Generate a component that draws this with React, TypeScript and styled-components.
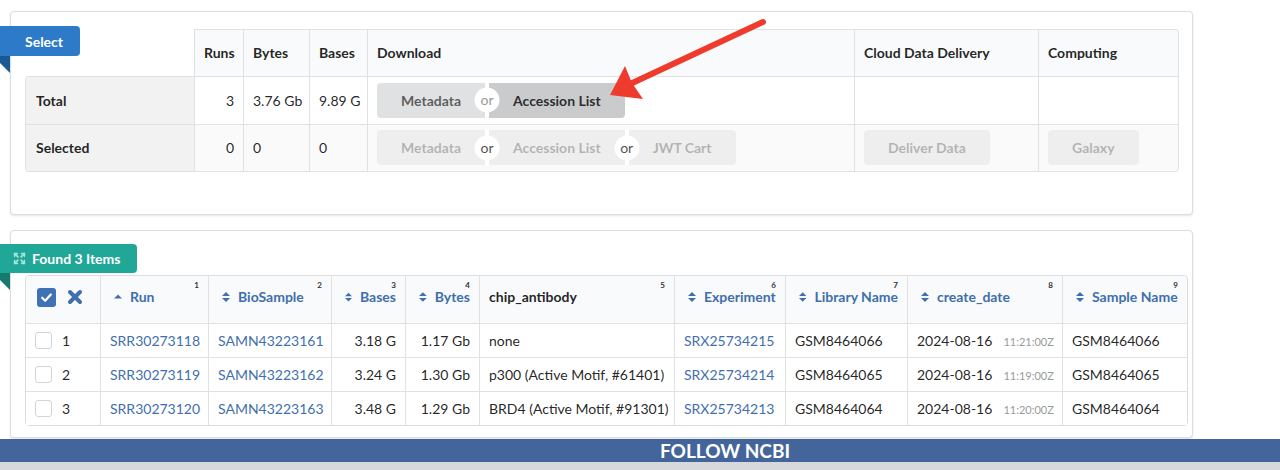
import React from 'react';
import styled, { createGlobalStyle } from 'styled-components';

const GlobalStyle = createGlobalStyle`
  html, body { margin: 0; padding: 0; background: #fff; overflow-x: hidden; }
  body {
    font-family: Lato, "Helvetica Neue", Arial, sans-serif;
    font-size: 14px;
    color: rgba(0, 0, 0, 0.87);
  }
  * { box-sizing: border-box; }
`;

const LINE = '#e0e1e2';
const BLUE = '#3f6fad';

const Page = styled.div`
  position: relative;
  display: flex;
  flex-direction: column;
  padding-top: 11px;
  width: 1280px;
  height: 470px;
  overflow: hidden;
`;

const Content = styled.div`
  display: flex;
  flex-direction: column;
  gap: 15px;
  padding-left: 10px;
`;

const Segment = styled.section<{ $pad: string }>`
  position: relative;
  width: 1183px;
  border: 1px solid #dcdddf;
  border-radius: 4px;
  box-shadow: 0 1px 2px 0 rgba(34, 36, 38, 0.12);
  padding: ${(p) => p.$pad};
  background: #fff;
`;

const Ribbon = styled.div<{ $bg: string; $fold: string; $top: number; $h: number; $pl: number }>`
  position: absolute;
  top: ${(p) => p.$top}px;
  left: -18px;
  height: ${(p) => p.$h}px;
  padding: 0 17px 0 ${(p) => p.$pl}px;
  display: flex;
  align-items: center;
  gap: 6px;
  background: ${(p) => p.$bg};
  color: #fff;
  font-weight: 700;
  font-size: 14px;
  border-radius: 0 4px 4px 0;
  z-index: 2;
  &::after {
    content: '';
    position: absolute;
    top: 100%;
    left: 0;
    border-style: solid;
    border-width: 0 17px 17px 0;
    border-color: transparent ${(p) => p.$fold} transparent transparent;
  }
`;

/* ---------- summary table ---------- */

const Col = styled.col<{ $w: number }>`
  width: ${(p) => p.$w}px;
`;

const SummaryTable = styled.table`
  width: 1154px;
  table-layout: fixed;
  border-collapse: separate;
  border-spacing: 0;
  & th, & td {
    border-top: 1px solid ${LINE};
    border-left: 1px solid ${LINE};
    padding: 0 9px;
    vertical-align: middle;
    text-align: left;
    white-space: nowrap;
  }
  & tr > :last-child { border-right: 1px solid ${LINE}; }
  & tbody tr:last-child > * { border-bottom: 1px solid ${LINE}; }
  & thead tr > :last-child { border-top-right-radius: 4px; }
  & tbody tr:first-child > :first-child { border-top-left-radius: 4px; }
  & tbody tr:last-child > :first-child { border-bottom-left-radius: 4px; }
  & tbody tr:last-child > :last-child { border-bottom-right-radius: 4px; }
`;

const SumHead = styled.th`
  height: 47px;
  background: #f9fafb;
  font-weight: 700;
  color: rgba(0, 0, 0, 0.87);
  padding-bottom: 2px !important;
`;

const BlankHead = styled.th`
  && {
    border: none;
    background: transparent;
  }
`;

const SumRow = styled.tr<{ $shade?: boolean }>`
  & > td {
    height: 48px;
    padding-bottom: 1px;
    background: ${(p) => (p.$shade ? '#fafafa' : '#fff')};
  }
`;

const LabelCell = styled.td`
  && { background: #f2f2f2; padding-left: 10px; }
  font-weight: 700;
`;

const SumCell = styled.td<{ $right?: boolean }>`
  && { text-align: ${(p) => (p.$right ? 'right' : 'left')}; }
`;

const BtnGroup = styled.div`
  display: inline-flex;
  align-items: stretch;
  vertical-align: middle;
  & > button:not(:first-child) { border-top-left-radius: 0; border-bottom-left-radius: 0; }
  & > button:not(:last-child) { border-top-right-radius: 0; border-bottom-right-radius: 0; }
`;

const Btn = styled.button<{ $active?: boolean }>`
  font-family: inherit;
  font-weight: 700;
  font-size: 14px;
  height: 35px;
  padding: 0 24px;
  border: none;
  border-radius: 4px;
  background: ${(p) => (p.$active ? '#cacbcd' : '#e0e1e2')};
  color: ${(p) => (p.$active ? 'rgba(0,0,0,0.8)' : 'rgba(0,0,0,0.6)')};
  cursor: pointer;
  white-space: nowrap;
  vertical-align: middle;
  &:disabled { opacity: 0.45; cursor: default; }
`;

const Or = styled.div<{ $c: string }>`
  position: relative;
  width: 4px;
  background: #fff;
  z-index: 1;
  &::before {
    content: 'or';
    position: absolute;
    top: 50%;
    left: 50%;
    transform: translate(-50%, -50%);
    width: 25px;
    height: 25px;
    line-height: 24px;
    border-radius: 50%;
    background: #fff;
    color: ${(p) => p.$c};
    text-align: center;
    font-size: 14px;
  }
`;

/* ---------- results table ---------- */

const ResultTable = styled.table`
  width: 1163px;
  table-layout: fixed;
  border-collapse: separate;
  border-spacing: 0;
  border: 1px solid #dcdddf;
  border-radius: 4px;
  & th, & td {
    padding: 0 9px;
    vertical-align: middle;
    text-align: left;
    border-left: 1px solid ${LINE};
    white-space: nowrap;
  }
  & tr > :first-child { border-left: none; }
  & tbody td { border-top: 1px solid ${LINE}; }
`;

const ResHead = styled.th<{ $sortable?: boolean }>`
  position: relative;
  height: 47px;
  background: #f9fafb;
  font-weight: 700;
  color: ${(p) => (p.$sortable ? BLUE : 'rgba(0,0,0,0.87)')};
  && { padding-bottom: 5px; }
  &:first-child { border-top-left-radius: 4px; }
  &:last-child { border-top-right-radius: 4px; }
`;

const HeadInner = styled.div<{ $indent?: boolean }>`
  display: flex;
  align-items: center;
  gap: 8px;
  padding-left: ${(p) => (p.$indent ? 4 : 0)}px;
  line-height: 20px;
`;

const ColNum = styled.sup`
  position: absolute;
  top: 5px;
  right: 9px;
  font-size: 8px;
  line-height: 8px;
  font-weight: 700;
  color: #333;
`;

const ResRow = styled.tr`
  & > td { height: 34px; background: #fff; }
`;

const ResCell = styled.td<{ $right?: boolean }>`
  && { text-align: ${(p) => (p.$right ? 'right' : 'left')}; }
`;

const Link = styled.a`
  color: ${BLUE};
  text-decoration: none;
`;

const CheckCell = styled.div`
  display: flex;
  align-items: center;
  gap: 10px;
`;

const HeadCheck = styled.div`
  display: flex;
  align-items: center;
  gap: 11px;
  padding-left: 2px;
  color: ${BLUE};
`;

const CheckBox = styled.span<{ $checked?: boolean }>`
  display: inline-flex;
  align-items: center;
  justify-content: center;
  flex: none;
  width: ${(p) => (p.$checked ? 19 : 17)}px;
  height: ${(p) => (p.$checked ? 19 : 17)}px;
  border-radius: 3px;
  background: ${(p) => (p.$checked ? '#3e72b5' : '#fff')};
  border: ${(p) => (p.$checked ? 'none' : '1px solid #d4d4d5')};
`;

const Time = styled.span`
  margin-left: 11px;
  font-size: 11px;
  color: #999;
`;

/* ---------- footer ---------- */

const Footer = styled.footer`
  margin-top: 1px;
  height: 25px;
  background: #44659c;
  color: #fff;
  display: flex;
  align-items: center;
  justify-content: center;
  padding-left: 170px;
  font-weight: 700;
  font-size: 19px;
`;

const FooterBase = styled.div`
  height: 10px;
  background: #d7d8db;
`;

const ArrowOverlay = styled.svg`
  position: absolute;
  left: 600px;
  top: 10px;
  pointer-events: none;
  z-index: 5;
`;

/* ---------- icons ---------- */

const SortIcon = ({ up }: { up?: boolean }) => (
  <svg width="8" height="12" viewBox="0 0 8 12" aria-hidden>
    {up ? (
      <path d="M0 7.5 L4 3.5 L8 7.5Z" fill="currentColor" />
    ) : (
      <>
        <path d="M0 5 L4 1 L8 5Z" fill="currentColor" />
        <path d="M0 7 L4 11 L8 7Z" fill="currentColor" />
      </>
    )}
  </svg>
);

const ExpandIcon = () => (
  <svg width="13" height="13" viewBox="0 0 24 24" fill="none" stroke="#a7e4da" strokeWidth="3" strokeLinecap="round" strokeLinejoin="round" aria-hidden>
    <path d="m15 15 6 6" />
    <path d="m15 9 6-6" />
    <path d="M21 16v5h-5" />
    <path d="M21 8V3h-5" />
    <path d="M3 16v5h5" />
    <path d="m3 21 6-6" />
    <path d="M3 8V3h5" />
    <path d="M9 9 3 3" />
  </svg>
);

const CheckMark = () => (
  <svg width="13" height="13" viewBox="0 0 24 24" fill="none" stroke="#fff" strokeWidth="4" strokeLinecap="round" strokeLinejoin="round" aria-hidden>
    <path d="M4 12.5 9.5 18 20 6.5" />
  </svg>
);

const TimesIcon = () => (
  <svg width="16" height="16" viewBox="0 0 16 16" aria-hidden>
    <path d="M3 3 L13 13 M13 3 L3 13" stroke="currentColor" strokeWidth="4" strokeLinecap="round" />
  </svg>
);

/* ---------- data ---------- */

const rows = [
  { n: 1, run: 'SRR30273118', bio: 'SAMN43223161', bases: '3.18 G', bytes: '1.17 Gb', ab: 'none', exp: 'SRX25734215', lib: 'GSM8464066', date: '2024-08-16', time: '11:21:00Z', sample: 'GSM8464066' },
  { n: 2, run: 'SRR30273119', bio: 'SAMN43223162', bases: '3.24 G', bytes: '1.30 Gb', ab: 'p300 (Active Motif, #61401)', exp: 'SRX25734214', lib: 'GSM8464065', date: '2024-08-16', time: '11:19:00Z', sample: 'GSM8464065' },
  { n: 3, run: 'SRR30273120', bio: 'SAMN43223163', bases: '3.48 G', bytes: '1.29 Gb', ab: 'BRD4 (Active Motif, #91301)', exp: 'SRX25734213', lib: 'GSM8464064', date: '2024-08-16', time: '11:20:00Z', sample: 'GSM8464064' },
];

const headers: { label: string; sort?: 'both' | 'up' }[] = [
  { label: 'Run', sort: 'up' },
  { label: 'BioSample', sort: 'both' },
  { label: 'Bases', sort: 'both' },
  { label: 'Bytes', sort: 'both' },
  { label: 'chip_antibody' },
  { label: 'Experiment', sort: 'both' },
  { label: 'Library Name', sort: 'both' },
  { label: 'create_date', sort: 'both' },
  { label: 'Sample Name', sort: 'both' },
];

export default function App() {
  return (
    <Page>
      <GlobalStyle />
      <Content>
        <Segment $pad="17px 13px 42px 14px">
          <Ribbon $bg="#2d7ac8" $fold="#1b5896" $top={14} $h={30} $pl={32}>
            Select
          </Ribbon>
          <SummaryTable>
            <colgroup>
              {[169, 49, 66, 58, 487, 184, 141].map((w, i) => (
                <Col $w={w} key={i} />
              ))}
            </colgroup>
            <thead>
              <tr>
                <BlankHead />
                <SumHead>Runs</SumHead>
                <SumHead>Bytes</SumHead>
                <SumHead>Bases</SumHead>
                <SumHead>Download</SumHead>
                <SumHead>Cloud Data Delivery</SumHead>
                <SumHead>Computing</SumHead>
              </tr>
            </thead>
            <tbody>
              <SumRow>
                <LabelCell>Total</LabelCell>
                <SumCell $right>3</SumCell>
                <SumCell>3.76 Gb</SumCell>
                <SumCell>9.89 G</SumCell>
                <SumCell>
                  <BtnGroup>
                    <Btn>Metadata</Btn>
                    <Or $c="#9a9a9a" />
                    <Btn $active>Accession List</Btn>
                  </BtnGroup>
                </SumCell>
                <SumCell />
                <SumCell />
              </SumRow>
              <SumRow $shade>
                <LabelCell>Selected</LabelCell>
                <SumCell $right>0</SumCell>
                <SumCell>0</SumCell>
                <SumCell>0</SumCell>
                <SumCell>
                  <BtnGroup>
                    <Btn disabled>Metadata</Btn>
                    <Or $c="#555" />
                    <Btn disabled>Accession List</Btn>
                    <Or $c="#555" />
                    <Btn disabled>JWT Cart</Btn>
                  </BtnGroup>
                </SumCell>
                <SumCell>
                  <Btn disabled>Deliver Data</Btn>
                </SumCell>
                <SumCell>
                  <Btn disabled>Galaxy</Btn>
                </SumCell>
              </SumRow>
            </tbody>
          </SummaryTable>
        </Segment>

        <Segment $pad="44px 4px 11px 14px">
          <Ribbon $bg="#21a797" $fold="#137a6d" $top={13} $h={29} $pl={20}>
            <ExpandIcon />
            Found 3 Items
          </Ribbon>
          <ResultTable>
            <colgroup>
              {[74, 108, 123, 74, 74, 195, 111, 122, 155, 125].map((w, i) => (
                <Col $w={w} key={i} />
              ))}
            </colgroup>
            <thead>
              <tr>
                <ResHead>
                  <HeadCheck>
                    <CheckBox $checked>
                      <CheckMark />
                    </CheckBox>
                    <TimesIcon />
                  </HeadCheck>
                </ResHead>
                {headers.map((h, i) => (
                  <ResHead key={h.label} $sortable={!!h.sort}>
                    <HeadInner $indent={!!h.sort}>
                      {h.sort && <SortIcon up={h.sort === 'up'} />}
                      {h.label}
                    </HeadInner>
                    <ColNum>{i + 1}</ColNum>
                  </ResHead>
                ))}
              </tr>
            </thead>
            <tbody>
              {rows.map((r) => (
                <ResRow key={r.n}>
                  <ResCell>
                    <CheckCell>
                      <CheckBox />
                      {r.n}
                    </CheckCell>
                  </ResCell>
                  <ResCell><Link href="#">{r.run}</Link></ResCell>
                  <ResCell><Link href="#">{r.bio}</Link></ResCell>
                  <ResCell $right>{r.bases}</ResCell>
                  <ResCell $right>{r.bytes}</ResCell>
                  <ResCell>{r.ab}</ResCell>
                  <ResCell><Link href="#">{r.exp}</Link></ResCell>
                  <ResCell>{r.lib}</ResCell>
                  <ResCell>
                    {r.date}
                    <Time>{r.time}</Time>
                  </ResCell>
                  <ResCell>{r.sample}</ResCell>
                </ResRow>
              ))}
            </tbody>
          </ResultTable>
        </Segment>
      </Content>

      <Footer>FOLLOW NCBI</Footer>
      <FooterBase />

      <ArrowOverlay width="180" height="100" viewBox="600 10 180 100">
        <line x1="763" y1="22" x2="628" y2="85" stroke="#ef3b2d" strokeWidth="6" strokeLinecap="round" />
        <polygon points="610,95 625,66 632,83 643,99" fill="#ef3b2d" />
      </ArrowOverlay>
    </Page>
  );
}
